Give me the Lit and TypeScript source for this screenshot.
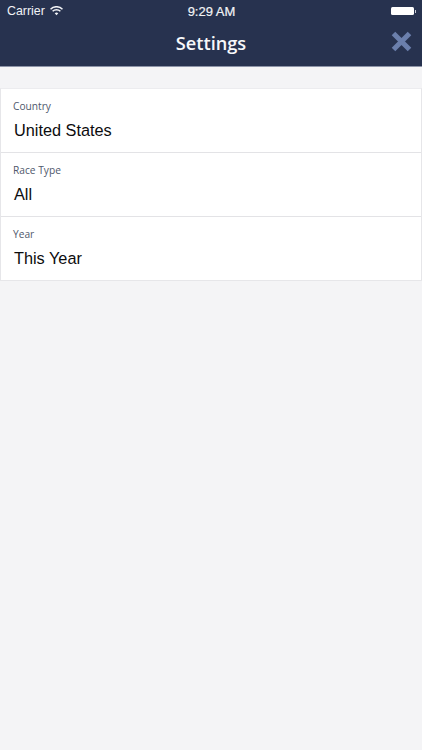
import { LitElement, html, css } from "lit";
import { customElement } from "lit/decorators.js";

@customElement("app-root")
export class AppRoot extends LitElement {
  static styles = css`
    :host { display: block; width: 422px; height: 750px; background: #f4f4f6; overflow: hidden; }
    .top { background: #27324f; height: 66px; border-bottom: 1px solid #8d94a8; display: flex; flex-direction: column; color: #fff; }
    .status { height: 22px; display: grid; grid-template-columns: 1fr auto 1fr; align-items: center; padding: 0 6px 0 7px; font: 12.4px "Liberation Sans", Arial, sans-serif; color: #f2f3f6; }
    .left { display: flex; align-items: center; gap: 5px; }
    .right { display: flex; justify-content: flex-end; align-items: center; }
    .clock { font-size: 13px; -webkit-text-stroke: 0.2px #f2f3f6; }
    .batt { width: 23px; height: 8px; background: #fff; border-radius: 1.5px; }
    .nub { width: 1.5px; height: 3px; background: #c9ccd6; margin-left: 1px; }
    .nav { flex: 1; display: flex; align-items: center; justify-content: center; position: relative; padding-bottom: 3px; }
    .title { font: 600 18.2px "Open Sans", sans-serif; color: #f7f8fa; }
    .close { position: absolute; right: 10px; top: 9px; width: 21px; height: 21px; display: block; }
    .card { margin: 21px 0 0; background: #fff; border: 1px solid #e6e6e9; border-top-color: #ececef; }
    .row { height: 64px; box-sizing: border-box; padding: 10px 12px 0 12px; border-bottom: 1px solid #e3e3e6; display: flex; flex-direction: column; }
    .row:last-child { border-bottom: 0; height: 63px; }
    .label { font: 10.2px/15px "Open Sans", sans-serif; color: #4f586c; }
    .value { font: 16.3px/20px "Liberation Sans", Arial, sans-serif; color: #0c0c0e; margin: 6px 0 0 1px; }
  `;

  render() {
    const rows = [
      ["Country", "United States"],
      ["Race Type", "All"],
      ["Year", "This Year"],
    ];
    return html`
      <div class="top">
        <div class="status">
          <div class="left">
            <span>Carrier</span>
            <svg width="13" height="10" viewBox="0 0 13 10" aria-hidden="true">
              <path d="M0.5 3.2a8.5 8.5 0 0 1 12 0" fill="none" stroke="#f2f3f6" stroke-width="1.5"/>
              <path d="M2.6 5.3a5.5 5.5 0 0 1 7.8 0" fill="none" stroke="#f2f3f6" stroke-width="1.5"/>
              <path d="M4.7 7.3a2.6 2.6 0 0 1 3.6 0L6.5 9.3z" fill="#f2f3f6"/>
            </svg>
          </div>
          <span class="clock">9:29 AM</span>
          <div class="right"><div class="batt"></div><div class="nub"></div></div>
        </div>
        <div class="nav">
          <span class="title">Settings</span>
          <svg class="close" viewBox="0 0 21 21" aria-hidden="true">
            <path d="M2.5 2.5L18.5 18.5M18.5 2.5L2.5 18.5" stroke="#6b7fac" stroke-width="5" fill="none"/>
          </svg>
        </div>
      </div>
      <div class="card">
        ${rows.map(
          ([l, v]) => html`<div class="row"><div class="label">${l}</div><div class="value">${v}</div></div>`
        )}
      </div>
    `;
  }
}
